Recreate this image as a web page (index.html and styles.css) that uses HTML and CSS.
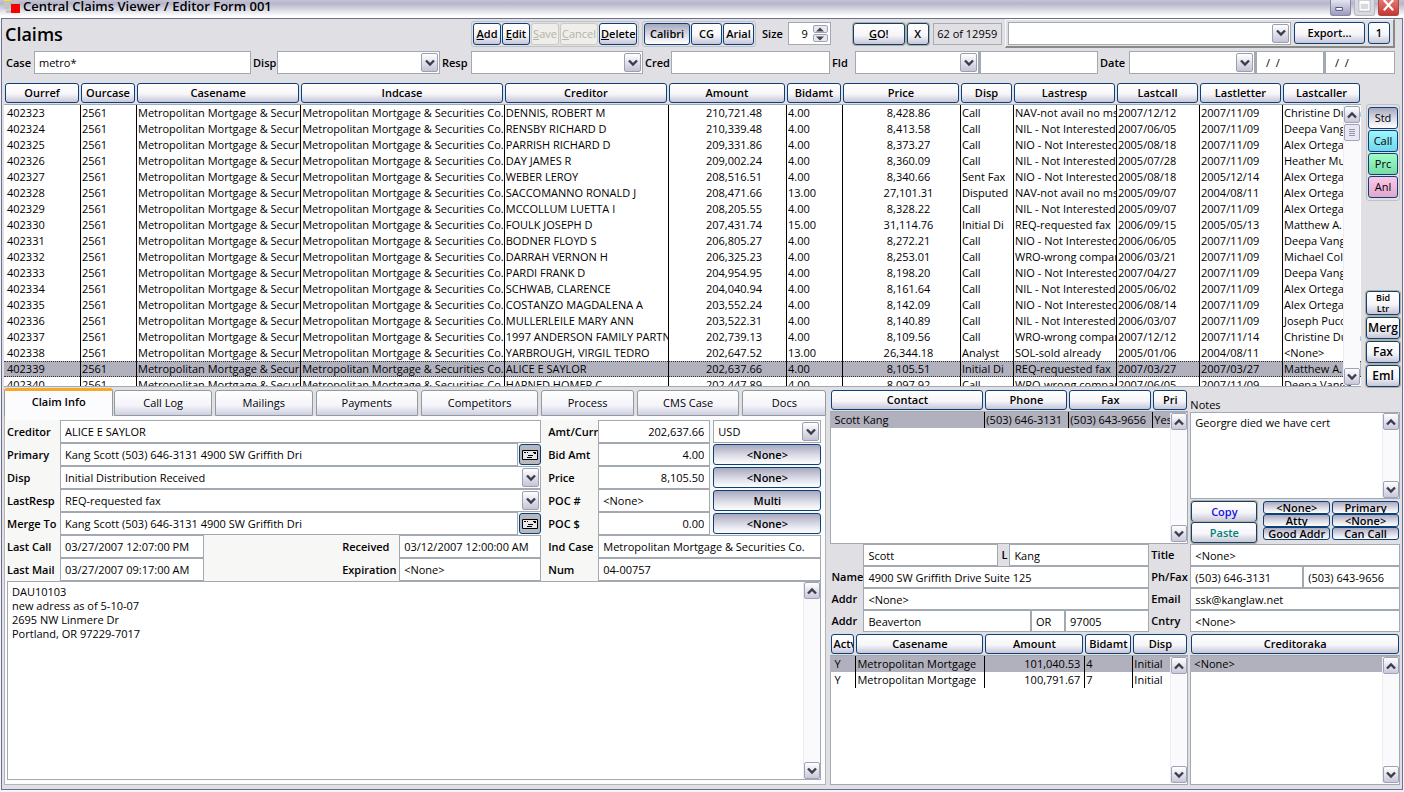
FILE: index.html
```html
<!DOCTYPE html>
<html lang="en">
<head>
<meta charset="utf-8">
<title>Central Claims Viewer / Editor Form 001</title>
<link rel="stylesheet" href="styles.css">
</head>
<body>
<svg class="defs" aria-hidden="true">
  <symbol id="down" viewBox="0 0 10 8"><path d="M1 1.5 L5 5.5 L9 1.5" fill="none" stroke="#3c3c4c" stroke-width="2.4"/></symbol>
  <symbol id="up" viewBox="0 0 10 8"><path d="M1 6.5 L5 2.5 L9 6.5" fill="none" stroke="#3c3c4c" stroke-width="2.4"/></symbol>
  <symbol id="card" viewBox="0 0 16 12"><path d="M.5 1.500h15v9H.5z" fill="#e8e8ec" stroke="#000"/><path d="M2 3.500h2M5 3.500h1M11 3.500h3M12 4.500h2M6 6.500h5M5 8.500h5" stroke="#000"/></symbol>
</svg>

<header class="titlebar">
  <svg class="app-icon" viewBox="0 0 18 14" aria-hidden="true"><path d="M1 0h7v1H1z" fill="#ffe600"/><path d="M1 2h6v7H1zM3 10h5v3H3zM9 0h6v3H9z" fill="#c4c4c8"/><path d="M8 4h9v9H8z" fill="#f80000"/></svg>
  <h1>Central Claims Viewer / Editor Form 001</h1>
  <div class="window-buttons">
    <button class="wb" aria-label="Minimize"><svg viewBox="0 0 20 16"><path d="M5 8h7v3H5z" fill="#fff" stroke="#4a4e78"/></svg></button>
    <button class="wb wb-off" aria-label="Maximize" disabled><svg viewBox="0 0 20 16"><path d="M5 1.500h10v9H5zM5 3h10" fill="none" stroke="#fff" stroke-width="2"/><path d="M4 0h12v12H4z" fill="none" stroke="#b4b4bc"/></svg></button>
    <button class="wb wb-close" aria-label="Close"><svg viewBox="0 0 20 16"><path d="M5 0l10 11M15 0L5 11" stroke="#fff" stroke-width="2.400"/></svg></button>
  </div>
</header>

<main class="window">
  <div class="toolbar">
    <h2>Claims</h2>
    <div class="group">
      <button class="btn w-s"><u>A</u>dd</button>
      <button class="btn w-s"><u>E</u>dit</button>
      <button class="btn w-s" disabled><u>S</u>ave</button>
      <button class="btn w-m" disabled><u>C</u>ancel</button>
      <button class="btn w-m"><u>D</u>elete</button>
    </div>
    <div class="group">
      <button class="btn w-xl pressed">Calibri</button>
      <button class="btn w-n">CG</button>
      <button class="btn w-n">Arial</button>
    </div>
    <label class="lbl size-label" for="size">Size</label>
    <div class="spinner">
      <input id="size" class="field num" value="9">
      <div class="spin-buttons">
        <button aria-label="Increase"><svg viewBox="0 0 8 5"><path d="M0 4.500L4 .5l4 4z" fill="#444"/></svg></button>
        <button aria-label="Decrease"><svg viewBox="0 0 8 5"><path d="M0 .5L4 4.500l4-4z" fill="#444"/></svg></button>
      </div>
    </div>
    <div class="go">
      <button class="btn gold w-go"><u>G</u>O!</button>
      <button class="btn gold w-x">X</button>
    </div>
    <output class="count">62 of 12959</output>
    <div class="export">
      <div class="combo grow"><select class="field" aria-label="Saved view"><option></option></select><span class="drop"><svg><use href="#down"/></svg></span></div>
      <button class="btn w-exp">Export...</button>
      <button class="btn w-x">1</button>
    </div>
  </div>

  <div class="filters">
    <label class="lbl" for="f-case">Case</label><input class="field" id="f-case" value="metro*">
    <label class="lbl" for="f-disp">Disp</label><div class="combo"><select class="field" id="f-disp"><option></option></select><span class="drop"><svg><use href="#down"/></svg></span></div>
    <label class="lbl" for="f-resp">Resp</label><div class="combo"><select class="field" id="f-resp"><option></option></select><span class="drop"><svg><use href="#down"/></svg></span></div>
    <label class="lbl" for="f-cred">Cred</label><input class="field" id="f-cred">
    <label class="lbl" for="f-fld">Fld</label><div class="combo"><select class="field" id="f-fld"><option></option></select><span class="drop"><svg><use href="#down"/></svg></span></div>
    <input class="field joined" aria-label="Field value">
    <label class="lbl" for="f-date">Date</label><div class="combo"><select class="field" id="f-date"><option></option></select><span class="drop"><svg><use href="#down"/></svg></span></div>
    <input class="field joined date" aria-label="From date" value="/  /">
    <input class="field joined date" aria-label="To date" value="/  /">
  </div>

  <section class="upper">
    <div class="grid-box claims-box">
      <table class="grid claims">
        <colgroup><col class="c1"><col class="c2"><col class="c3"><col class="c4"><col class="c5"><col class="c6"><col class="c7"><col class="c8"><col class="c9"><col class="c10"><col class="c11"><col class="c12"><col class="c13"></colgroup>
        <thead><tr>
          <th><button class="btn">Ourref</button></th><th><button class="btn">Ourcase</button></th><th><button class="btn">Casename</button></th><th><button class="btn">Indcase</button></th><th><button class="btn">Creditor</button></th><th><button class="btn">Amount</button></th><th><button class="btn">Bidamt</button></th><th><button class="btn">Price</button></th><th><button class="btn">Disp</button></th><th><button class="btn">Lastresp</button></th><th><button class="btn">Lastcall</button></th><th><button class="btn">Lastletter</button></th><th><button class="btn">Lastcaller</button></th>
        </tr></thead>
        <tbody id="claims"></tbody>
      </table>
      <div class="scroll"><button aria-label="Scroll up"><svg><use href="#up"/></svg></button><span class="thumb"></span><button aria-label="Scroll down"><svg><use href="#down"/></svg></button></div>
    </div>
    <aside class="side">
      <div class="side-group">
        <button class="btn plain pressed">Std</button>
        <button class="btn plain cyan">Call</button>
        <button class="btn plain green">Prc</button>
        <button class="btn plain pink">Anl</button>
      </div>
      <div class="side-tools">
        <button class="btn gold two">Bid<br>Ltr</button>
        <button class="btn gold big">Merg</button>
        <button class="btn gold big">Fax</button>
        <button class="btn gold big">Eml</button>
      </div>
    </aside>
  </section>

  <section class="lower">
    <div class="claim">
      <div class="tabs" role="tablist">
        <button class="tab active t1" role="tab" aria-selected="true">Claim Info</button>
        <button class="tab t2" role="tab">Call Log</button>
        <button class="tab t2" role="tab">Mailings</button>
        <button class="tab t3" role="tab">Payments</button>
        <button class="tab t4" role="tab">Competitors</button>
        <button class="tab t5" role="tab">Process</button>
        <button class="tab t3" role="tab">CMS Case</button>
        <button class="tab t6" role="tab">Docs</button>
      </div>
      <div class="claim-body">
        <div class="form">
          <label class="lbl" for="creditor">Creditor</label>
          <input class="field wide" id="creditor" value="ALICE E SAYLOR">
          <label class="lbl in" for="amt">Amt/Curr</label>
          <input class="field num" id="amt" value="202,637.66">
          <div class="combo pad"><select class="field" aria-label="Currency"><option>USD</option></select><span class="drop"><svg><use href="#down"/></svg></span></div>

          <label class="lbl" for="primary">Primary</label>
          <div class="wide with-card"><input class="field" id="primary" value="Kang Scott (503) 646-3131 4900 SW Griffith Dri"><button class="btn card" aria-label="Open primary contact"><svg><use href="#card"/></svg></button></div>
          <label class="lbl in" for="bid">Bid Amt</label>
          <input class="field num" id="bid" value="4.00">
          <button class="btn pressed pad">&lt;None&gt;</button>

          <label class="lbl" for="disp">Disp</label>
          <div class="combo wide"><select class="field" id="disp"><option>Initial Distribution Received</option></select><span class="drop"><svg><use href="#down"/></svg></span></div>
          <label class="lbl in" for="price">Price</label>
          <input class="field num" id="price" value="8,105.50">
          <button class="btn pressed pad">&lt;None&gt;</button>

          <label class="lbl" for="lastresp">LastResp</label>
          <div class="combo wide"><select class="field" id="lastresp"><option>REQ-requested fax</option></select><span class="drop"><svg><use href="#down"/></svg></span></div>
          <label class="lbl in" for="pocn">POC #</label>
          <input class="field" id="pocn" value="&lt;None&gt;">
          <button class="btn pressed pad">Multi</button>

          <label class="lbl" for="merge">Merge To</label>
          <div class="wide with-card"><input class="field" id="merge" value="Kang Scott (503) 646-3131 4900 SW Griffith Dri"><button class="btn card" aria-label="Open merge contact"><svg><use href="#card"/></svg></button></div>
          <label class="lbl in" for="pocd">POC $</label>
          <input class="field num" id="pocd" value="0.00">
          <button class="btn pressed pad">&lt;None&gt;</button>

          <label class="lbl" for="lcall">Last Call</label>
          <input class="field" id="lcall" value="03/27/2007 12:07:00 PM">
          <label class="lbl received" for="received">Received</label>
          <input class="field" id="received" value="03/12/2007 12:00:00 AM">
          <label class="lbl in" for="indcase">Ind Case</label>
          <input class="field two-col" id="indcase" value="Metropolitan Mortgage &amp; Securities Co.">

          <label class="lbl" for="lmail">Last Mail</label>
          <input class="field" id="lmail" value="03/27/2007 09:17:00 AM">
          <label class="lbl received" for="expiration">Expiration</label>
          <input class="field" id="expiration" value="&lt;None&gt;">
          <label class="lbl in" for="num">Num</label>
          <input class="field two-col" id="num" value="04-00757">
        </div>
        <div class="memo">
          <textarea class="field" aria-label="Claim notes">DAU10103
new adress as of 5-10-07
2695 NW Linmere Dr
Portland, OR 97229-7017</textarea>
          <div class="scroll"><button aria-label="Scroll up"><svg><use href="#up"/></svg></button><button aria-label="Scroll down"><svg><use href="#down"/></svg></button></div>
        </div>
      </div>
    </div>

    <div class="contact">
      <div class="grid-box contacts-box">
        <table class="grid contacts">
          <colgroup><col class="k1"><col class="k2"><col class="k2"><col class="k3"></colgroup>
          <thead><tr><th><button class="btn">Contact</button></th><th><button class="btn">Phone</button></th><th><button class="btn">Fax</button></th><th><button class="btn">Pri</button></th></tr></thead>
          <tbody><tr class="sel"><td>Scott Kang</td><td>(503) 646-3131</td><td>(503) 643-9656</td><td>Yes</td></tr></tbody>
        </table>
        <div class="scroll"><button aria-label="Scroll up"><svg><use href="#up"/></svg></button><button aria-label="Scroll down"><svg><use href="#down"/></svg></button></div>
      </div>

      <div class="notes">
        <label class="lbl" for="notes">Notes</label>
        <div class="memo">
          <textarea class="field" id="notes">Georgre died we have cert</textarea>
          <div class="scroll"><button aria-label="Scroll up"><svg><use href="#up"/></svg></button><button aria-label="Scroll down"><svg><use href="#down"/></svg></button></div>
        </div>
        <div class="note-actions">
          <div class="copy-paste"><button class="btn gold copy">Copy</button><button class="btn gold paste">Paste</button></div>
          <div class="flags">
            <button class="btn pressed">&lt;None&gt;</button><button class="btn pressed">Primary</button>
            <button class="btn pressed">Atty</button><button class="btn pressed">&lt;None&gt;</button>
            <button class="btn pressed">Good Addr</button><button class="btn pressed">Can Call</button>
          </div>
        </div>
      </div>

      <div class="person">
        <span></span>
        <div class="names"><input class="field" aria-label="First name" value="Scott"><label class="lbl" for="last">L</label><input class="field" id="last" value="Kang"></div>
        <label class="lbl" for="name">Name</label><input class="field" id="name" value="4900 SW Griffith Drive Suite 125">
        <label class="lbl" for="addr">Addr</label><input class="field" id="addr" value="&lt;None&gt;">
        <label class="lbl" for="city">Addr</label>
        <div class="place"><input class="field" id="city" value="Beaverton"><input class="field" aria-label="State" value="OR"><input class="field" aria-label="Zip" value="97005"></div>
      </div>
      <div class="reach-labels">
        <label class="lbl" for="title">Title</label>
        <label class="lbl" for="phone">Ph/Fax</label>
        <label class="lbl" for="email">Email</label>
        <label class="lbl" for="cntry">Cntry</label>
      </div>
      <div class="reach">
        <input class="field" id="title" value="&lt;None&gt;">
        <div class="phones"><input class="field" id="phone" value="(503) 646-3131"><input class="field" aria-label="Fax" value="(503) 643-9656"></div>
        <input class="field" id="email" value="ssk@kanglaw.net">
        <input class="field" id="cntry" value="&lt;None&gt;">
      </div>

      <div class="grid-box cases-box">
        <table class="grid cases">
          <colgroup><col class="a1"><col class="a2"><col class="a3"><col class="a4"><col class="a5"></colgroup>
          <thead><tr><th><button class="btn clip">Actv</button></th><th><button class="btn">Casename</button></th><th><button class="btn">Amount</button></th><th><button class="btn">Bidamt</button></th><th><button class="btn">Disp</button></th></tr></thead>
          <tbody>
            <tr class="sel"><td>Y</td><td>Metropolitan Mortgage</td><td class="right">101,040.53</td><td>4</td><td>Initial</td></tr>
            <tr><td>Y</td><td>Metropolitan Mortgage</td><td class="right">100,791.67</td><td>7</td><td>Initial</td></tr>
          </tbody>
        </table>
        <div class="scroll"><button aria-label="Scroll up"><svg><use href="#up"/></svg></button><button aria-label="Scroll down"><svg><use href="#down"/></svg></button></div>
      </div>
      <div class="grid-box aka-box">
        <table class="grid aka">
          <thead><tr><th><button class="btn">Creditoraka</button></th></tr></thead>
          <tbody><tr class="sel"><td>&lt;None&gt;</td></tr></tbody>
        </table>
        <div class="scroll"><button aria-label="Scroll up"><svg><use href="#up"/></svg></button><button aria-label="Scroll down"><svg><use href="#down"/></svg></button></div>
      </div>
    </div>
  </section>
</main>
<script src="script.js"></script>
</body>
</html>
```

FILE: styles.css
```css
* { box-sizing: border-box; }

body {
  margin: 0;
  min-height: 100vh;
  display: flex;
  flex-direction: column;
  background: #f4f4f8;
  color: #000;
  font: 11px/16px "Open Sans", "Noto Sans", sans-serif;
}

button, input, select, textarea {
  margin: 0;
  font: inherit;
  color: inherit;
  border-radius: 0;
}

h1, h2 { margin: 0; }

.defs { position: absolute; width: 0; height: 0; }

/* Title bar */
.titlebar {
  display: flex;
  align-items: flex-start;
  height: 18px;
  padding: 0 5px 0 3px;
  overflow: hidden;
  background: linear-gradient(#c4c4d4, #b6b6ca 20%, #ffffff 90%);
}
.app-icon { width: 18px; height: 14px; margin-right: 2px; }
.titlebar h1 { flex: 1; font-size: 13px; line-height: 13px; font-weight: 600; white-space: nowrap; }
.window-buttons { display: flex; gap: 3px; }
.wb {
  width: 21px;
  height: 16px;
  padding: 0;
  border: 1px solid #8487a6;
  border-top: 0;
  border-radius: 0 0 3px 3px;
  background: linear-gradient(#e4e4f0, #9c9cbc);
}
.wb svg { display: block; width: 19px; height: 15px; }
.wb-off { background: #d8d8e0; border-color: #b8b8c4; }
.wb-close { background: linear-gradient(#e47870, #c83430); border-color: #a84848; }

.window {
  flex: 1;
  display: flex;
  flex-direction: column;
  margin: 0 1px 2px;
  padding: 0 2px 4px;
  border: 1px solid #6c6f90;
  background: #e0dfe4;
}

/* Shared controls */
.lbl { font-weight: 600; white-space: nowrap; align-self: center; }
.field {
  display: block;
  width: 100%;
  min-width: 0;
  height: 23px;
  padding: 0 4px;
  border: 1px solid #a3a9b0;
  background: #fff;
  outline: 0;
}
.num { text-align: right; padding-right: 5px; }

.btn {
  display: block;
  height: 22px;
  padding: 0 1px;
  border: 1px solid #0c4078;
  border-radius: 3px;
  background: linear-gradient(#ffffff, #f6f6fa 55%, #c6c6d8);
  font-weight: 600;
  line-height: 18px;
  white-space: nowrap;
  overflow: hidden;
}
.btn.plain { font-weight: 400; }
.btn.pressed { background: linear-gradient(#a8a8be, #dcdce8 55%, #ffffff); }
.btn:disabled { padding: 0; color: #b4b2a8; border-color: #cccabf; background: #efeeea; font-weight: 400; }
.btn.gold { box-shadow: 0 0 0 1px #b5ae98; }

.combo { position: relative; min-width: 0; }
.combo select { appearance: none; }
.drop {
  position: absolute;
  top: 2px;
  right: 2px;
  bottom: 2px;
  width: 17px;
  display: flex;
  align-items: center;
  justify-content: center;
  border: 1px solid #9c9fb4;
  border-radius: 2px;
  background: linear-gradient(#fff, #c4c4d6);
  pointer-events: none;
}
.drop svg, .scroll svg { width: 10px; height: 8px; display: block; }

.scroll {
  position: absolute;
  top: 1px;
  right: 1px;
  bottom: 1px;
  width: 17px;
  display: flex;
  flex-direction: column;
  border-left: 1px solid #ececf4;
  background: #fafafc;
}
.scroll button, .thumb {
  display: flex;
  align-items: center;
  justify-content: center;
  flex: none;
  width: 16px;
  height: 17px;
  padding: 0;
  border: 1px solid #a0a3b8;
  border-radius: 2px;
  background: linear-gradient(#fff, #c8c8da);
}
.scroll button:last-child { margin-top: auto; }
.thumb { margin-top: 1px; background: #e8e8f2; }
.thumb::before {
  content: "";
  width: 6px;
  height: 7px;
  background: repeating-linear-gradient(#9496ac 0 1px, transparent 1px 2px);
}

/* Toolbar */
.toolbar { display: flex; align-items: center; height: 29px; padding: 0 5px 0 1px; }
.toolbar h2 { flex: 473 1 0; font-size: 18px; line-height: 24px; font-weight: 600; }
.group {
  display: flex;
  gap: 1px;
  margin-right: 3px;
  padding: 1px;
  border: 1px solid #c2c2c6;
  border-radius: 3px;
}
.w-s { width: 28px; }
.w-m { width: 38px; }
.w-xl { width: 46px; }
.w-n { width: 31px; }
.w-x { width: 22px; }
.w-go { width: 52px; }
.w-exp { width: 71px; }
.size-label { margin: 0 5px 0 3px; }
.spinner { position: relative; width: 43px; }
.spinner .num { padding-right: 22px; }
.spin-buttons { position: absolute; top: 3px; right: 3px; display: grid; gap: 1px; }
.spin-buttons button {
  width: 15px;
  height: 8px;
  padding: 0;
  display: flex;
  align-items: center;
  justify-content: center;
  border: 1px solid #a0a3b8;
  border-radius: 2px;
  background: #e8e8f0;
}
.spin-buttons svg { width: 8px; height: 5px; }
.go { display: flex; gap: 2px; margin: 0 4px 0 22px; }
.count { width: 69px; height: 22px; margin-right: 3px; border: 1px solid #a8acb0; text-align: center; line-height: 20px; white-space: nowrap; }
.export {
  flex: 388 1 0;
  display: flex;
  align-items: center;
  gap: 3px;
  height: 29px;
  padding: 0 3px 0 2px;
  border: 2px solid #8a8a84;
  border-top: 1px solid #f8f8f8;
  border-left: 1px solid #f8f8f8;
}
.grow { flex: 1; }

.filters {
  display: grid;
  grid-template-columns: 28px 217fr 26px 163fr 31px 172fr 28px 159fr 25px 124fr 119fr 31px 126fr 69fr 71fr;
  padding: 3px 5px 9px 2px;
}
.filters .lbl { padding-left: 2px; }
.filters .lbl:first-child { padding-left: 0; }
.joined { border-left-width: 2px; }
.date { padding-left: 9px; white-space: pre; }

/* Data grids */
.upper { display: flex; gap: 5px; }
.grid-box { position: relative; min-width: 0; overflow: hidden; }
.grid-box .scroll { top: 23px; }
.grid { width: 100%; table-layout: fixed; border-collapse: separate; border-spacing: 0; }
.grid th { padding: 0 1px 1px; border-bottom: 1px solid #a3a9b0; font-weight: 600; }
.grid th .btn { width: 100%; height: 20px; line-height: 16px; }
.grid td {
  height: 16px;
  padding: 0 1px;
  border-left: 1px solid #000;
  line-height: 16px;
  white-space: nowrap;
  overflow: hidden;
}
.grid td:first-child { border-left: 0; padding-left: 4px; }
.grid .right { text-align: right; padding-right: 4px; }
.grid .sel td { background: #b1b1bd; }
.claims-box { flex: 1; height: 304px; border-bottom: 1px solid #a3a9b0; }
.claims td { background: #fff; }
.claims td:first-child { padding-left: 3px; }
.claims .sel td { border-top: 1px dotted #333; border-bottom: 1px dotted #333; line-height: 14px; }
.claims .amount { text-align: right; padding-right: 24px; }
.claims .price { text-align: center; padding-left: 15px; }
.c1 { width: 76px; } .c2 { width: 56px; } .c3 { width: 12.1%; } .c4 { width: 15%; }
.c5 { width: 12.1%; } .c6 { width: 118px; } .c7 { width: 56px; } .c8 { width: 118px; }
.c9 { width: 53px; } .c10 { width: 103px; } .c11 { width: 83px; } .c12 { width: 83px; } .c13 { width: 79px; }

.side { width: 34px; display: flex; flex-direction: column; justify-content: space-between; padding-top: 21px; }
.side-group { display: grid; gap: 1px; padding: 2px 1px; border: 1px solid #c2c2c6; border-radius: 3px; }
.side-tools { display: grid; gap: 2px; }
.side .btn { width: 100%; }
.side .two { height: 24px; font-size: 9px; line-height: 11px; }
.side .big { font-size: 12px; }
.cyan { background: linear-gradient(#a0f4fc, #70d8ec); }
.green { background: linear-gradient(#a0fcc8, #74dca4); }
.pink { background: linear-gradient(#fcc8e8, #e0a8cc); }

/* Lower half */
.lower { flex: 1; display: grid; grid-template-columns: 823fr 570fr; gap: 4px; margin-top: 1px; }

.claim { display: flex; flex-direction: column; min-width: 0; }
.tabs { display: flex; align-items: flex-end; gap: 3px; height: 28px; }
.tab {
  min-width: 0;
  height: 26px;
  padding: 0;
  border: 1px solid #919b9c;
  border-radius: 3px 3px 0 0;
  background: linear-gradient(#fff, #f4f4fa 60%, #cfcfe2);
}
.tab.active { height: 28px; margin-right: -2px; padding-bottom: 4px; border-top: 3px solid #f8a828; border-bottom: 0; background: #fcfcfe; font-weight: 600; }
.t1 { flex: 110 1 0; } .t2 { flex: 98 1 0; } .t3 { flex: 103 1 0; }
.t4 { flex: 118 1 0; } .t5 { flex: 93 1 0; } .t6 { flex: 84 1 0; }

.claim-body {
  flex: 1;
  display: flex;
  flex-direction: column;
  padding: 4px 4px 4px 2px;
  border: 1px solid #b4b4b8;
  border-top: 0;
  background: #fcfcfc;
}
.form {
  display: grid;
  grid-template-columns: 53px 144fr 138fr 57px 142fr 57px 112fr 111fr;
  grid-auto-rows: 23px;
  background: #f7f7f6;
}
.wide { grid-column: span 4; }
.two-col { grid-column: span 2; }
.in { padding-left: 7px; }
.received { grid-column: span 2; justify-self: end; width: 57px; }
.pad { margin-left: 3px; }
.form .btn.pad { margin-top: 1px; height: 21px; }
.with-card { display: flex; gap: 1px; }
.btn.card { flex: none; width: 22px; height: 21px; margin-top: 1px; background: #b8b8c0; }
.card svg { display: block; width: 16px; height: 12px; margin: 0 auto; }

.memo { position: relative; flex: 1; display: flex; }
.memo textarea { flex: 1; height: auto; resize: none; padding: 3px 20px 4px 4px; line-height: 14px; overflow: hidden; }

.contact {
  display: grid;
  grid-template-columns: 318fr 41px 209fr;
  grid-template-rows: 154px auto 1fr;
  min-width: 0;
  padding-top: 2px;
}
.contact .grid-box {
  isolation: isolate;
  border-bottom: 1px solid #a3a9b0;
}
.contact .grid-box::before {
  content: "";
  position: absolute;
  z-index: -1;
  inset: 21px 0 0;
  border: 1px solid #a3a9b0;
  border-bottom: 0;
  background: #fff;
}
.contacts-box, .cases-box { grid-column: span 2; margin-right: 2px; }
.k2 { width: 84px; } .k3 { width: 36px; }
.a1 { width: 25px; } .a3 { width: 100px; } .a4 { width: 48px; } .a5 { width: 56px; }
.btn.clip { text-align: left; }

.notes { display: flex; flex-direction: column; padding-top: 8px; }
.notes .lbl { align-self: flex-start; line-height: 14px; font-weight: 400; }
.note-actions { display: flex; gap: 6px; padding: 2px 1px 1px; }
.copy-paste { width: 66px; display: grid; }
.copy-paste .btn { width: 100%; height: 21px; }
.copy { color: #1010e8; }
.paste { color: #008078; }
.flags { flex: 1; display: grid; grid-template-columns: 1fr 1fr; gap: 0 2px; align-content: start; }
.flags .btn { height: 13px; line-height: 11px; }

.person { display: grid; grid-template-columns: 33px 1fr; grid-auto-rows: 22px; }
.person .lbl { padding-left: 1px; }
.person .field, .reach .field { height: 22px; }
.names { display: grid; grid-template-columns: 135fr 11px 140fr; }
.names .lbl { padding-left: 3px; }
.place { display: grid; grid-template-columns: 167fr 34fr 84fr; }
.reach-labels, .reach { display: grid; grid-auto-rows: 22px; min-width: 0; }
.reach-labels .lbl { padding-left: 2px; }
.phones { display: grid; grid-template-columns: 112fr 96fr; }
.cases-box, .aka-box { margin-top: 2px; }
```

FILE: script.js
```js
const caseName = "Metropolitan Mortgage & Securities Co.";
const rows = [
  ["402323", "DENNIS, ROBERT M", "210,721.48", "4.00", "8,428.86", "Call", "NAV-not avail no msg", "2007/12/12", "2007/11/09", "Christine Dunn"],
  ["402324", "RENSBY RICHARD D", "210,339.48", "4.00", "8,413.58", "Call", "NIL - Not Interested", "2007/06/05", "2007/11/09", "Deepa Vanga"],
  ["402325", "PARRISH RICHARD D", "209,331.86", "4.00", "8,373.27", "Call", "NIO - Not Interested", "2005/08/18", "2007/11/09", "Alex Ortega"],
  ["402326", "DAY JAMES R", "209,002.24", "4.00", "8,360.09", "Call", "NIL - Not Interested", "2005/07/28", "2007/11/09", "Heather Mull"],
  ["402327", "WEBER LEROY", "208,516.51", "4.00", "8,340.66", "Sent Fax", "NIO - Not Interested", "2005/08/18", "2005/12/14", "Alex Ortega"],
  ["402328", "SACCOMANNO RONALD J", "208,471.66", "13.00", "27,101.31", "Disputed", "NAV-not avail no msg", "2005/09/07", "2004/08/11", "Alex Ortega"],
  ["402329", "MCCOLLUM LUETTA I", "208,205.55", "4.00", "8,328.22", "Call", "NIL - Not Interested", "2005/09/07", "2007/11/09", "Alex Ortega"],
  ["402330", "FOULK JOSEPH D", "207,431.74", "15.00", "31,114.76", "Initial Di", "REQ-requested fax", "2006/09/15", "2005/05/13", "Matthew A."],
  ["402331", "BODNER FLOYD S", "206,805.27", "4.00", "8,272.21", "Call", "NIO - Not Interested", "2006/06/05", "2007/11/09", "Deepa Vanga"],
  ["402332", "DARRAH VERNON H", "206,325.23", "4.00", "8,253.01", "Call", "WRO-wrong company", "2006/03/21", "2007/11/09", "Michael Cole"],
  ["402333", "PARDI FRANK D", "204,954.95", "4.00", "8,198.20", "Call", "NIO - Not Interested", "2007/04/27", "2007/11/09", "Deepa Vanga"],
  ["402334", "SCHWAB, CLARENCE", "204,040.94", "4.00", "8,161.64", "Call", "NIL - Not Interested", "2005/06/02", "2007/11/09", "Alex Ortega"],
  ["402335", "COSTANZO MAGDALENA A", "203,552.24", "4.00", "8,142.09", "Call", "NIO - Not Interested", "2006/08/14", "2007/11/09", "Alex Ortega"],
  ["402336", "MULLERLEILE MARY ANN", "203,522.31", "4.00", "8,140.89", "Call", "NIL - Not Interested", "2006/03/07", "2007/11/09", "Joseph Puccio"],
  ["402337", "1997 ANDERSON FAMILY PARTNERSHIP", "202,739.13", "4.00", "8,109.56", "Call", "WRO-wrong company", "2007/12/12", "2007/11/14", "Christine Dunn"],
  ["402338", "YARBROUGH, VIRGIL TEDRO", "202,647.52", "13.00", "26,344.18", "Analyst", "SOL-sold already", "2005/01/06", "2004/08/11", "<None>"],
  ["402339", "ALICE E SAYLOR", "202,637.66", "4.00", "8,105.51", "Initial Di", "REQ-requested fax", "2007/03/27", "2007/03/27", "Matthew A."],
  ["402340", "HARNED HOMER C", "202,447.89", "4.00", "8,097.92", "Call", "WRO-wrong company", "2007/06/05", "2007/11/09", "Deepa Vanga"]
];
const body = document.getElementById("claims");
for (const [ref, creditor, amount, bid, price, ...rest] of rows) {
  const tr = body.insertRow();
  if (ref === "402339") tr.className = "sel";
  for (const text of [ref, "2561", caseName, caseName, creditor, amount, bid, price, ...rest]) {
    const td = tr.insertCell();
    td.textContent = text;
    if (text === amount) td.className = "amount";
    if (text === price) td.className = "price";
  }
}
```
